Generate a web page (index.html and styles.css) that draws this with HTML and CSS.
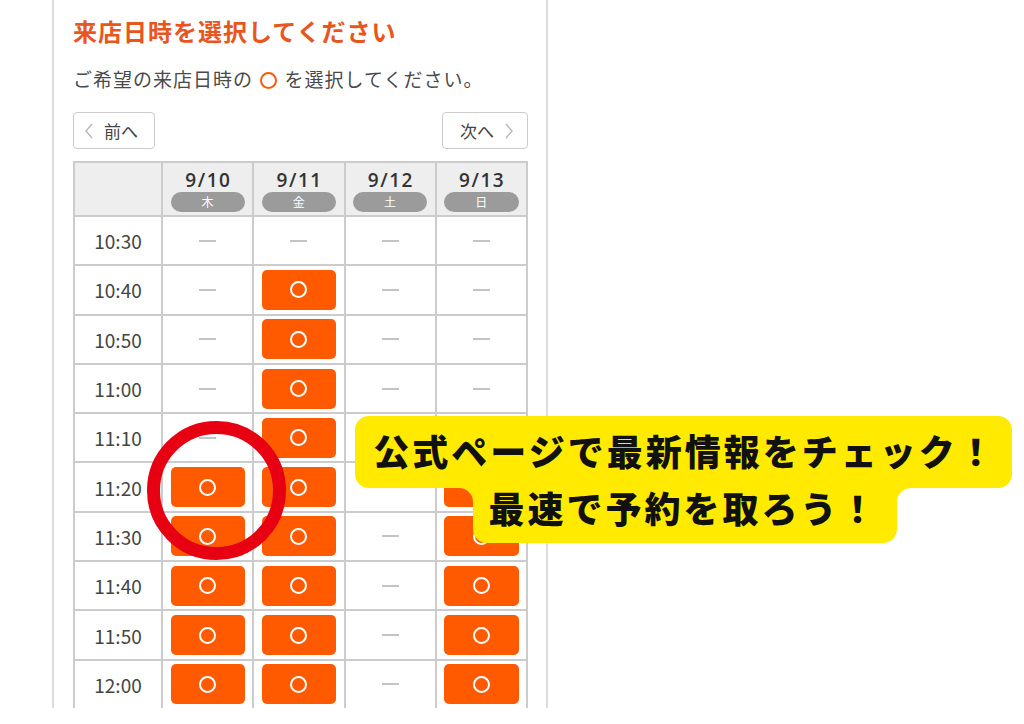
FILE: index.html
```html
<!DOCTYPE html>
<html lang="ja">
<head>
<meta charset="utf-8">
<title>来店日時を選択してください</title>
<link rel="stylesheet" href="styles.css">
</head>
<body>
<div class="page">
  <div class="panel">
    <h1 class="title">来店日時を選択してください</h1>
    <p class="lead">ご希望の来店日時の <span class="ring-o"></span> を選択してください。</p>
    <div class="nav">
      <button class="nav-btn prev"><svg class="chev" width="8" height="16" viewBox="0 0 8 16"><polyline points="7,1 1,8 7,15"/></svg>前へ</button>
      <button class="nav-btn next">次へ<svg class="chev" width="8" height="16" viewBox="0 0 8 16"><polyline points="1,1 7,8 1,15"/></svg></button>
    </div>
    <div class="grid">
      <div class="cell head"></div>
      <div class="cell head"><span class="date">9/10</span><span class="dow">木</span></div>
      <div class="cell head"><span class="date">9/11</span><span class="dow">金</span></div>
      <div class="cell head"><span class="date">9/12</span><span class="dow">土</span></div>
      <div class="cell head"><span class="date">9/13</span><span class="dow">日</span></div>

      <div class="cell time">10:30</div>
      <div class="cell"><span class="dash"></span></div>
      <div class="cell"><span class="dash"></span></div>
      <div class="cell"><span class="dash"></span></div>
      <div class="cell"><span class="dash"></span></div>

      <div class="cell time">10:40</div>
      <div class="cell"><span class="dash"></span></div>
      <div class="cell"><span class="slot"><span class="slot-o"></span></span></div>
      <div class="cell"><span class="dash"></span></div>
      <div class="cell"><span class="dash"></span></div>

      <div class="cell time">10:50</div>
      <div class="cell"><span class="dash"></span></div>
      <div class="cell"><span class="slot"><span class="slot-o"></span></span></div>
      <div class="cell"><span class="dash"></span></div>
      <div class="cell"><span class="dash"></span></div>

      <div class="cell time">11:00</div>
      <div class="cell"><span class="dash"></span></div>
      <div class="cell"><span class="slot"><span class="slot-o"></span></span></div>
      <div class="cell"><span class="dash"></span></div>
      <div class="cell"><span class="dash"></span></div>

      <div class="cell time">11:10</div>
      <div class="cell"><span class="dash"></span></div>
      <div class="cell"><span class="slot"><span class="slot-o"></span></span></div>
      <div class="cell"><span class="dash"></span></div>
      <div class="cell"><span class="dash"></span></div>

      <div class="cell time">11:20</div>
      <div class="cell"><span class="slot"><span class="slot-o"></span></span></div>
      <div class="cell"><span class="slot"><span class="slot-o"></span></span></div>
      <div class="cell"><span class="dash"></span></div>
      <div class="cell"><span class="slot"><span class="slot-o"></span></span></div>

      <div class="cell time">11:30</div>
      <div class="cell"><span class="slot"><span class="slot-o"></span></span></div>
      <div class="cell"><span class="slot"><span class="slot-o"></span></span></div>
      <div class="cell"><span class="dash"></span></div>
      <div class="cell"><span class="slot"><span class="slot-o"></span></span></div>

      <div class="cell time">11:40</div>
      <div class="cell"><span class="slot"><span class="slot-o"></span></span></div>
      <div class="cell"><span class="slot"><span class="slot-o"></span></span></div>
      <div class="cell"><span class="dash"></span></div>
      <div class="cell"><span class="slot"><span class="slot-o"></span></span></div>

      <div class="cell time">11:50</div>
      <div class="cell"><span class="slot"><span class="slot-o"></span></span></div>
      <div class="cell"><span class="slot"><span class="slot-o"></span></span></div>
      <div class="cell"><span class="dash"></span></div>
      <div class="cell"><span class="slot"><span class="slot-o"></span></span></div>

      <div class="cell time">12:00</div>
      <div class="cell"><span class="slot"><span class="slot-o"></span></span></div>
      <div class="cell"><span class="slot"><span class="slot-o"></span></span></div>
      <div class="cell"><span class="dash"></span></div>
      <div class="cell"><span class="slot"><span class="slot-o"></span></span></div>
    </div>
  </div>

  <div class="mark"></div>

  <div class="callout">
    <svg class="callout-bg" width="657" height="127" viewBox="0 0 657 127">
      <path d="M14 0 H643 A14 14 0 0 1 657 14 V58 A14 14 0 0 1 643 72 H556 A14 14 0 0 0 542 86 V113 A14 14 0 0 1 528 127 H132 A14 14 0 0 1 118 113 V86 A14 14 0 0 0 104 72 H14 A14 14 0 0 1 0 58 V14 A14 14 0 0 1 14 0 Z"/>
    </svg>
    <p class="callout-text">公式ページで最新情報をチェック！<br>最速で予約を取ろう！</p>
  </div>
</div>
</body>
</html>
```

FILE: styles.css
```css
html, body {
  margin: 0;
  padding: 0;
  background: #ffffff;
}

body {
  font-family: "Noto Sans CJK JP", "Noto Sans", sans-serif;
  color: #444444;
}

.page {
  position: relative;
  width: 1024px;
  height: 708px;
  overflow: hidden;
}

.panel {
  margin-left: 52px;
  width: 496px;
  height: 708px;
  box-sizing: border-box;
  border-left: 2px solid #dcdcdc;
  border-right: 2px solid #dcdcdc;
  padding: 0 18px 0 19px;
}

.title {
  margin: 0;
  padding-top: 13px;
  font-size: 24px;
  line-height: 36px;
  font-weight: 700;
  letter-spacing: 1px;
  color: #e8561e;
}

.lead {
  margin: 16px 0 0;
  font-size: 19px;
  line-height: 28px;
  letter-spacing: 1px;
  color: #4a4a4a;
}

.ring-o {
  display: inline-block;
  width: 17px;
  height: 17px;
  box-sizing: border-box;
  border: 2.5px solid #ff5a00;
  border-radius: 50%;
  vertical-align: -2px;
  margin: 0 2px;
}

.nav {
  display: flex;
  justify-content: space-between;
  margin-top: 19px;
}

.nav-btn {
  display: flex;
  align-items: center;
  gap: 11px;
  height: 37px;
  box-sizing: border-box;
  border: 1px solid #cccccc;
  border-radius: 4px;
  background: #ffffff;
  font-family: inherit;
  font-size: 17px;
  color: #444444;
  padding: 0 16px 0 11px;
}

.nav-btn.next {
  padding: 0 14px 0 17px;
}

.chev polyline {
  fill: none;
  stroke: #bbbbbb;
  stroke-width: 1.5;
}

.grid {
  margin-top: 12px;
  display: grid;
  grid-template-columns: 86px repeat(4, 1fr);
  grid-template-rows: 52px;
  grid-auto-rows: 47.3px;
  gap: 2px;
  padding: 2px;
  background: #cccccc;
}

.cell {
  background: #ffffff;
  display: flex;
  align-items: center;
  justify-content: center;
}

.head {
  background: #eeeeee;
  flex-direction: column;
  justify-content: flex-start;
  padding-top: 7px;
  box-sizing: border-box;
}

.date {
  font-family: "Open Sans", "Noto Sans CJK JP", sans-serif;
  font-size: 19px;
  line-height: 20px;
  font-weight: 600;
  letter-spacing: 1.5px;
  text-indent: 1.5px;
  color: #333333;
}

.dow {
  margin-top: 2px;
  width: calc(100% - 15px);
  height: 20px;
  border-radius: 10px;
  background: #9b9b9b;
  color: #ffffff;
  font-size: 12px;
  line-height: 20px;
  text-align: center;
}

.time {
  font-size: 19px;
  color: #444444;
}

.dash {
  width: 17px;
  height: 2px;
  background: #c4c4c4;
}

.slot {
  width: calc(100% - 15px);
  height: 40px;
  border-radius: 5px;
  background: #ff5a00;
  display: flex;
  align-items: center;
  justify-content: center;
}

.slot-o {
  width: 17px;
  height: 17px;
  box-sizing: border-box;
  border: 2px solid #ffffff;
  border-radius: 50%;
}

.mark {
  position: absolute;
  left: 147px;
  top: 421px;
  width: 139px;
  height: 139px;
  box-sizing: border-box;
  border: 13px solid #e60012;
  border-radius: 50%;
}

.callout {
  position: absolute;
  left: 355px;
  top: 416px;
  width: 657px;
  height: 127px;
}

.callout-bg {
  position: absolute;
  left: 0;
  top: 0;
}

.callout-bg path {
  fill: #ffea00;
}

.callout-text {
  position: relative;
  margin: 0;
  padding-top: 5.5px;
  text-align: center;
  font-size: 36px;
  line-height: 57px;
  font-weight: 900;
  letter-spacing: 3px;
  text-indent: 3px;
  color: #111111;
}
```
